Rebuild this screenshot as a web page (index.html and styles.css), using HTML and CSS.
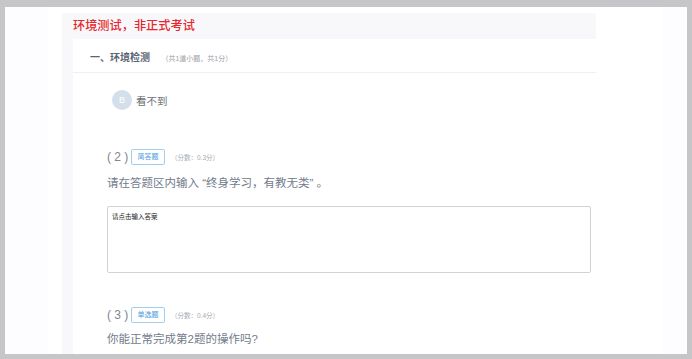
FILE: index.html
```html
<!DOCTYPE html>
<html lang="zh">
	<head>
		<meta charset="utf-8">
		<title>环境测试</title>
		<link rel="stylesheet" href="styles.css">
	</head>
	<body>
		<div class="screen">
			<div class="side"></div>
			<div class="main">
				<div class="head">
					<h1>环境测试，非正式考试</h1>
				</div>
				<div class="wrap">
					<div class="card">
						<div class="sec">
							<span class="sec-name">一、环境检测</span>
							<span class="sec-info">（共1道小题，共1分）</span>
						</div>
						<div class="body">
							<div class="opt">
								<span class="dot">B</span>
								<span class="opt-text">看不到</span>
							</div>
							<div class="q q2">
								<div class="q-top">
									<span class="num">( 2 )</span>
									<span class="tag">简答题</span>
									<span class="score">（分数：0.3分）</span>
								</div>
								<p class="q-text">请在答题区内输入 “终身学习，有教无类” 。</p>
								<div class="answer">请点击输入答案</div>
							</div>
							<div class="q q3">
								<div class="q-top">
									<span class="num">( 3 )</span>
									<span class="tag">单选题</span>
									<span class="score">（分数：0.4分）</span>
								</div>
								<p class="q-text">你能正常完成第2题的操作吗?</p>
							</div>
						</div>
					</div>
				</div>
			</div>
			<div class="gap"></div>
			<div class="edge"></div>
		</div>
	</body>
</html>
```

FILE: styles.css
```css
* {
  margin: 0;
  padding: 0;
}

body {
  background-color: #c6c6c8;
  font-family: "Liberation Sans", "Noto Sans CJK SC", sans-serif;
  overflow: hidden;
}

.screen {
  display: flex;
  margin: 7px 5px 5px 5px;
  height: 347px;
  background-color: #fff;
  overflow: hidden;
}

.side {
  width: 43px;
  margin-right: 14px;
  background-color: #fdfcfe;
}

.main {
  width: 534px;
  margin-top: 6px;
  background-color: #f8f8fa;
}

.head {
  height: 26px;
  padding-left: 11px;
}

.head h1 {
  font-size: 12.2px;
  line-height: 26px;
  font-weight: 500;
  color: #e8262d;
}

.wrap {
  padding-left: 11px;
  height: 100%;
}

.card {
  background-color: #fff;
  height: 100%;
}

.sec {
  height: 33px;
  line-height: 33px;
  padding-left: 17px;
  border-bottom: 1px solid #efeff2;
}

.sec-name {
  font-size: 10px;
  font-weight: bold;
  color: #5b6473;
}

.sec-info {
  margin-left: 7px;
  font-size: 7px;
  color: #9a9ea6;
}

.body {
  padding: 0 5px 0 34px;
}

.opt {
  display: flex;
  align-items: center;
  margin-top: 17px;
  padding-left: 5px;
}

.dot {
  width: 20px;
  height: 20px;
  border-radius: 50%;
  background-color: #d3dfea;
  color: #fff;
  font-size: 9px;
  line-height: 20px;
  text-align: center;
}

.opt-text {
  margin-left: 4px;
  font-size: 10.5px;
  color: #6e7278;
}

.q2 {
  margin-top: 39px;
}

.q3 {
  margin-top: 34px;
}

.q-top {
  display: flex;
  align-items: center;
  height: 16px;
}

.num {
  width: 24px;
  font-size: 12px;
  color: #80858e;
}

.tag {
  width: 32px;
  height: 14px;
  border: 1px solid #a3cdef;
  border-radius: 2px;
  font-size: 7px;
  line-height: 14px;
  text-align: center;
  color: #4a9be0;
}

.score {
  margin-left: 6px;
  font-size: 6.5px;
  color: #a5a9b0;
}

.q-text {
  margin-top: 10px;
  font-size: 11.5px;
  line-height: 16px;
  color: #737b8b;
}

.q3 .q-text {
  margin-top: 8px;
}

.answer {
  margin-top: 15px;
  height: 57px;
  padding: 4px;
  border: 1px solid #d2d2d4;
  border-radius: 2px;
  font-size: 6.5px;
  color: #222;
}

.gap {
  width: 67px;
}

.edge {
  width: 24px;
  background-color: #fdfcff;
}
```
